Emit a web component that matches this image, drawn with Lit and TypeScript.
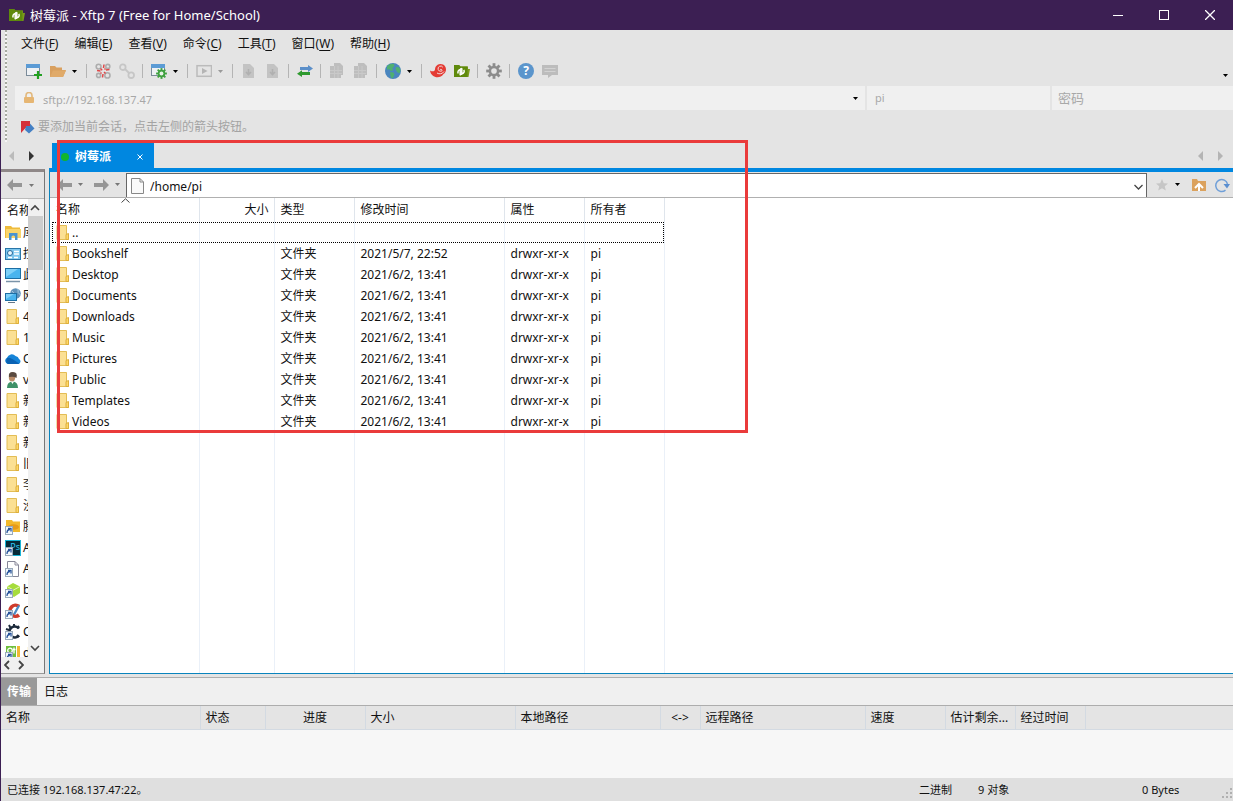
import { LitElement, html, css, svg, nothing } from "lit";
import { customElement } from "lit/decorators.js";

const icon = (body: unknown, w = 16, h = 16) =>
  html`<svg class="ico" width=${w} height=${h} viewBox="0 0 ${w} ${h}" aria-hidden="true">${body}</svg>`;

const caret = (color = "#000") => icon(svg`<path d="M0 0H5L2.5 3Z" fill=${color}/>`, 5, 3);

const folder = icon(svg`
  <path d="M1 .5H10.5V9L12.5 10V14.5H1Z" fill="#fbe093" stroke="#e3bd55"/>
  <path d="M10 9.5L12.5 8.5V14.5H10Z" fill="#ffd866" stroke="#dcae3c"/>`, 14, 15);

const xftp = svg`
  <path d="M0 2H5L6.500 3.500H14V6H16L14.500 14H0Z" fill="#7c9a1e"/>
  <path d="M0 2H5L6.500 3.500H13.500V14H0Z" fill="#5f8a0c"/>
  <path d="M6.200 12.200V6.500A2.800 2.800 0 0 0 4.200 10.500M7.800 5.200V11A2.800 2.800 0 0 0 9.800 6.800" fill="none" stroke="#fff" stroke-width="1.500"/>
  <path d="M6 6L8 5.200M6 12L8 11.200" stroke="#fff" stroke-width="1"/>`;

const gearPath = (cx: number, cy: number, r: number, color: string, hole: string) => svg`
  <g transform="translate(${cx} ${cy})">
    ${[0, 45, 90, 135].map(a => svg`<rect x=${-r * 0.18} y=${-r} width=${r * 0.36} height=${r * 2} fill=${color} transform="rotate(${a})"/>`)}
    <circle r=${r * 0.68} fill=${color}/><circle r=${r * 0.36} fill=${hole}/>
  </g>`;

const windowShape = svg`
  <rect x=".5" y="1.5" width="13" height="11" fill="#eef1f4" stroke="#7b8b99"/>
  <rect x="0" y="1" width="14" height="4" fill="#5b9bd5"/>`;

const greyPage = svg`<path d="M2 1H9L13 5V15H2Z" fill="#c3c3c3"/>`;
const greyStack = svg`<path d="M5 0H11L14 3V12H12V15H1V3H5Z" fill="#bebebe"/>
  <path d="M1 7.500H13M1 10.500H13M5.500 3V15M9 3V15" stroke="#c9c9c9"/>`;

const icons = {
  newSession: svg`${windowShape}<path d="M12 8V16M8 12H16" stroke="#22a022" stroke-width="2.200"/>`,
  open: svg`<path d="M0 3H5L6.500 4.500H12V7H16L13 14H0Z" fill="#d9a05f"/><path d="M3 7.500H16L13 14H0Z" fill="#e0aa69"/>`,
  disconnect: svg`<g fill="none" stroke="#adadad" stroke-width="1.600"><circle cx="3.600" cy="3.600" r="2.400"/><circle cx="12.800" cy="3.400" r="2"/><circle cx="3.600" cy="12.400" r="2"/><circle cx="12.400" cy="12.400" r="2.600"/></g>
    <path d="M9 1.500L8.500 5M2 7.500L5.500 8M11 7L14.500 6.500M8 11L7.500 14.500M5.500 5.500L7.200 7.200M9 9L10.500 10.500M10.500 5.500L9.500 6.500M6.500 9.500L5.500 10.500" stroke="#e04848" stroke-width="1.500"/>`,
  connect: svg`<g fill="none" stroke="#c6c6c6" stroke-width="1.800"><circle cx="3.800" cy="4.200" r="2.800"/><circle cx="12.200" cy="12.200" r="2.800"/><path d="M6 6L10 10"/></g>`,
  props: svg`${windowShape}${gearPath(10.5, 10.5, 5.4, "#3fa13f", "#e8f2e8")}`,
  run: svg`<rect x="1" y="2.700" width="14.500" height="10.600" fill="none" stroke="#bbb" stroke-width="1.500"/><path d="M6 5L11.500 8L6 11Z" fill="#b5b5b5"/>`,
  down: svg`${greyPage}<path d="M7.500 6V11M5 9L7.500 11.500L10 9" stroke="#b0b0b0" stroke-width="1.600" fill="none"/>`,
  transfer: svg`<path d="M3 4H11V2L16 5.500L11 9V7H3Z" fill="#5b8fc9"/><path d="M13 9H5V7.300L0 10.700L5 14V12H13Z" fill="#2f9a2f"/>`,
  stack: greyStack,
  globe: svg`<circle cx="8" cy="8" r="8" fill="#4a86bf"/><path d="M2 3.500C4 1 7 .5 9 1L9.500 3L7.500 5L8 7.500L5.500 8L4 6L2 7ZM5 9L8.500 9.500L9.500 11.500L7.500 15.500C5 14.500 5.500 11.500 5 9ZM11 4L14 4.200L15.600 7L14.500 10.500L12 9L10.500 6Z" fill="#4fb070"/>`,
  xshell: svg`<path d="M0 7.500C2.500 9 4.500 8.500 5 6.500A5.500 5.500 0 1 1 13.500 11C10 16.500 1 15 0 7.500Z" fill="#e43b34"/>
    <path d="M10.200 7A.9 .9 0 1 1 11.200 8.200A2.600 2.600 0 1 1 12.800 4.200M14 8.500A5 5 0 0 1 7 10" fill="none" stroke="#f3dcdb" stroke-width="1"/>`,
  xftp,
  gear: gearPath(8, 8, 7.8, "#8c8c8c", "#e4e4e4"),
  chat: svg`<path d="M0 2H16V12H10L6 15V12H0Z" fill="#bcbcbc"/><path d="M2.500 5.500H13.500M2.500 8.500H13.500" stroke="#d2d2d2"/>`,
};

const questionIcon = html`<span class="help">?</span>`;

type Tool = { t: unknown; name: string; drop?: string } | "sep";
const tools: Tool[] = [
  { t: icon(icons.newSession), name: "新建" },
  { t: icon(icons.open), name: "打开", drop: "#000" },
  "sep",
  { t: icon(icons.disconnect), name: "断开" },
  { t: icon(icons.connect), name: "重新连接" },
  "sep",
  { t: icon(icons.props), name: "属性", drop: "#000" },
  "sep",
  { t: icon(icons.run), name: "运行", drop: "#999" },
  "sep",
  { t: icon(icons.down), name: "下载" },
  { t: icon(icons.down), name: "上传" },
  "sep",
  { t: icon(icons.transfer), name: "同步" },
  "sep",
  { t: icon(icons.stack), name: "复制" },
  { t: icon(icons.stack), name: "粘贴" },
  "sep",
  { t: icon(icons.globe), name: "语言", drop: "#000" },
  "sep",
  { t: icon(icons.xshell), name: "Xshell" },
  { t: icon(icons.xftp), name: "Xftp" },
  "sep",
  { t: icon(icons.gear), name: "选项" },
  "sep",
  { t: questionIcon, name: "帮助" },
  { t: icon(icons.chat), name: "反馈" },
];

const menus = [["文件", "F"], ["编辑", "E"], ["查看", "V"], ["命令", "C"], ["工具", "T"], ["窗口", "W"], ["帮助", "H"]];

const files = [
  ["Bookshelf", "2021/5/7, 22:52"],
  ...["Desktop", "Documents", "Downloads", "Music", "Pictures", "Public", "Templates", "Videos"].map(n => [n, "2021/6/2, 13:41"]),
];

const shortcut = svg`<rect x=".5" y="7.500" width="7" height="8" fill="#f4f8fc" stroke="#9ab"/><path d="M2 14C2 11.500 3 10.500 5 10.500M3 9.500H6V12.500" fill="none" stroke="#27539b" stroke-width="1.300"/>`;
const monitor = (x: number, y: number, w: number, h: number) =>
  svg`<rect x=${x + 0.5} y=${y + 0.5} width=${w - 1} height=${h - 1} fill="#49b4ee" stroke="#1c6ea4"/><path d="M${x + 1} ${y + 1}H${x + w - 3}L${x + 1} ${y + h - 2}Z" fill="#7fd0f8"/>`;

const side: [unknown, string][] = [
  [icon(svg`<path d="M0 1H6L7.500 2.500H15V13H0Z" fill="#eebb3c"/><path d="M1 4H16V13H1Z" fill="#fad56c"/><path d="M4 15V8H12.500V15H10V11.500Q8.300 9.500 6.500 11.500V15Z" fill="#4a93cf"/>`), "库"],
  [icon(svg`<rect x=".5" y="2.500" width="15" height="11" fill="#7cc6ee" stroke="#2a76a8"/><circle cx="5" cy="7" r="2.500" fill="#e9f8ff" stroke="#26689c"/><path d="M9 5.500H14M9 8H14M3 11.500H7M9 11.500H13" stroke="#fff" stroke-width="1.300"/>`), "控制面板"],
  [icon(svg`${monitor(0, 1, 16, 11)}<path d="M1 14.500H15" stroke="#7a93a8" stroke-width="1.500"/>`), "此电脑"],
  [icon(svg`<circle cx="10.500" cy="5.500" r="5.300" fill="#5f92ba"/><path d="M7 3Q10 5 9 8M13 1Q12 5 15.500 7" stroke="#a9cbe2" fill="none"/>${monitor(0, 5, 12, 8)}<path d="M3 14.500H10" stroke="#667788"/>`), "网络"],
  [folder, "4"],
  [folder, "1"],
  [icon(svg`<path d="M3 13A3.300 3.300 0 0 1 2 6.800A5 5 0 0 1 10.500 5A4 4 0 0 1 14 8A2.700 2.700 0 0 1 13.500 13Z" fill="#1684d8"/><path d="M2 7Q5 5.500 14 12.500L13.500 13H3Q0 12 2 7Z" fill="#0a62b4"/>`), "OneDrive"],
  [icon(svg`<path d="M2 16Q2 9.500 7.500 9.500T13 16Z" fill="#3f9168"/><ellipse cx="7" cy="5" rx="3.200" ry="4.500" fill="#b98b68"/><path d="M4 5Q3 0 8 0T11.500 6Q9 4 4 5Z" fill="#5a4a40"/><path d="M6 9.500L7.500 12L9 9.500" fill="#fff"/>`), "vip"],
  [folder, "新建"],
  [folder, "新建"],
  [folder, "新建"],
  [folder, "旧"],
  [folder, "李"],
  [folder, "没"],
  [icon(svg`<path d="M1 1H7L8 2.500H15V13H1Z" fill="#f3b92d"/><ellipse cx="8.500" cy="8" rx="5.500" ry="2.800" fill="#e79b18"/>${shortcut}`), "腾讯"],
  [html`<span class="ps"><span>Ps</span>${icon(shortcut)}</span>`, "Adobe"],
  [icon(svg`<path d="M2.500 .5H10L13.500 4V15.500H2.500Z" fill="#fff" stroke="#889"/><path d="M10 .5V4H13.500" fill="none" stroke="#889"/>${shortcut}`), "Axure"],
  [icon(svg`<path d="M8 1L15 4.500V11L9 15L2 11V4.500Z" fill="#a6dc3c"/><path d="M2 4.500L8.500 8L15 4.500" stroke="#e4f6b8" fill="none"/>${shortcut}`), "blue"],
  [icon(svg`<path d="M14 3.500A5.500 5.500 0 1 0 14 12" fill="none" stroke="#cf3b2c" stroke-width="3.600"/><path d="M8 11L13 2L15 3L10 12Z" fill="#4a8ac4"/>${shortcut}`), "CCleaner"],
  [icon(svg`<path d="M14 4.500A5.500 5.500 0 1 0 14 11.500" fill="none" stroke="#1d2b3c" stroke-width="2.600"/><path d="M4 1L5.500 4M9 0V3M1 5L4 6M14 2L12 4M14 13L12 11" stroke="#1d2b3c" stroke-width="2"/>${shortcut}`), "Cheat"],
  [icon(svg`<path d="M1 1H11V14H1Z" fill="#6fbf3e"/><path d="M12 1H15V14H12Z" fill="#f0b833"/><circle cx="5" cy="5.500" r="2.300" fill="none" stroke="#fff" stroke-width="1.300"/><path d="M9 2.500V8.500M8 4.500H10.500" stroke="#fff" stroke-width="1.300"/>${shortcut}`), "designer"],
];

const transferCols: [string, string][] = [
  ["名称", "c199"], ["状态", "c65"], ["进度", "c100 mid"], ["大小", "c150"], ["本地路径", "c145"],
  ["<->", "c40 mid"], ["远程路径", "c165"], ["速度", "c80"], ["估计剩余...", "c70"], ["经过时间", "c70"], ["", ""],
];

const arrowBack = icon(svg`<path d="M0 7L6 1V5H15V9H6V13Z" fill="#969696"/>`, 15, 14);
const arrowFwd = icon(svg`<path d="M15 7L9 1V5H0V9H9V13Z" fill="#969696"/>`, 15, 14);
const tri = (left: boolean, color: string) =>
  icon(left ? svg`<path d="M5 0V10L0 5Z" fill=${color}/>` : svg`<path d="M0 0V10L5 5Z" fill=${color}/>`, 5, 10);
const chev = (d: string, w: number, h: number, sw = 1.6) =>
  icon(svg`<path d=${d} fill="none" stroke="#444" stroke-width=${sw}/>`, w, h);

@customElement("app-root")
export class AppRoot extends LitElement {
  static styles = css`
    :host {
      display: flex;
      flex-direction: column;
      position: relative;
      height: 100vh;
      box-sizing: border-box;
      overflow: hidden;
      background: #e4e4e4;
      color: #111;
      font: 12px/20px "Noto Sans", "Noto Sans CJK SC", sans-serif;
    }
    *, *::before { box-sizing: border-box; }
    button, input { font: inherit; color: inherit; border: 0; padding: 0; margin: 0; background: none; border-radius: 0; }
    input { min-width: 0; outline: none; }
    button { display: flex; align-items: center; justify-content: center; white-space: nowrap; }
    .ico { display: block; flex: none; }
    .grow { flex: 1; min-width: 0; }

    .title { flex: none; display: flex; align-items: center; height: 30px; padding-left: 9px; background: #3c1f53; color: #fff; }
    .title h1 { margin: 0; padding-left: 5px; font: inherit; font-size: 13px; flex: 1; }
    .title button { width: 46px; height: 29px; }
    .body { flex: 1; min-height: 0; display: flex; flex-direction: column; border-left: 1px solid #3c1f53; }

    .chrome { flex: none; display: flex; height: 112px; }
    .grip { flex: none; width: 2px; margin: 0 8px 0 4px; background: repeating-linear-gradient(#a6aaa0 0 2px, #f6f6f6 2px 4px); }
    .rows { flex: 1; min-width: 0; display: flex; flex-direction: column; }
    .menu { display: flex; height: 27px; align-items: center; gap: 16px; padding-left: 6px; }
    .menu u { text-underline-offset: 2px; }
    .tools { display: flex; height: 28px; align-items: center; padding-left: 7px; }
    .tools button { width: 24px; height: 24px; }
    .tools .drop { width: 13px; justify-content: flex-start; padding-left: 2px; }
    .sep { width: 1px; height: 14px; margin: 0 4px 0 3px; background: #b4b4b4; }
    .tools .more { width: 12px; margin-left: auto; align-items: flex-end; padding-bottom: 6px; margin-right: 2px; }
    .help { width: 16px; height: 16px; border-radius: 8px; background: #5b95cc; color: #fff; font-weight: 700; line-height: 16px; text-align: center; }
    .address { display: flex; height: 25px; padding-top: 1px; gap: 2px; color: #a8a8a8; }
    .address label { display: flex; align-items: center; background: #f0f0f0; padding: 2px 0 0 8px; min-width: 0; }
    .address input::placeholder { color: #a8a8a8; opacity: 1; }
    .address .host { flex: 1; gap: 8px; font-size: 11px; }
    .address .host input { flex: 1; padding-top: 2px; }
    .address .host .ico { margin-top: -2px; }
    .address .host button { width: 20px; height: 20px; color: #000; }
    .address .user { width: 183px; padding: 0 0 0 8px; font-size: 11px; }
    .address .pass { width: 181px; padding: 0 0 0 6px; font-size: 13px; }
    .address .user input, .address .pass input { width: 100%; }
    .hint { display: flex; align-items: center; gap: 3px; height: 32px; padding: 2px 0 0 5px; color: #a3a3a3; }

    .main { position: relative; flex: 1; min-height: 0; display: flex; }
    .left { width: 44px; flex: none; display: flex; flex-direction: column; }
    .steps { display: flex; height: 27px; align-items: center; gap: 15px; padding: 0 8px; }
    .leftpane { flex: 1; min-height: 0; display: flex; flex-direction: column; border-top: 3px solid #8f8888; border-right: 1px solid #777; border-bottom: 1px solid #999; background: #f0f0f0; }
    .leftbar { height: 27px; display: flex; align-items: center; gap: 7px; padding-left: 6px; background: #e4e4e4; border-bottom: 1px solid #bbb; }
    .split { flex: 1; min-height: 0; display: flex; }
    .sidelist { flex: 1; min-width: 0; overflow: hidden; background: #fff; }
    .sidehead { height: 23px; padding: 2px 0 1px 6px; white-space: nowrap; overflow: hidden; }
    .sidelist ul { list-style: none; margin: 0; padding: 0; }
    .sidelist li { display: flex; align-items: center; height: 21px; padding-left: 4px; gap: 2px; white-space: nowrap; overflow: hidden; }
    .slot { width: 16px; flex: none; display: flex; justify-content: center; }
    .ps { display: block; position: relative; width: 16px; height: 16px; background: #062a38; border: 1px solid #17b3d6; color: #31c5f0; font-size: 9px; line-height: 12px; text-align: right; }
    .ps .ico { position: absolute; left: -1px; top: -1px; }
    .vbar { width: 16px; flex: none; display: flex; flex-direction: column; }
    .vbar button { height: 17px; width: 14px; }
    .thumb { height: 54px; width: 15px; background: #cdcdcd; }
    .hbar { display: flex; gap: 8px; height: 16px; align-items: center; padding-left: 3px; }

    .right { flex: 1; min-width: 0; margin-left: 4px; display: flex; flex-direction: column; }
    .tabs { display: flex; height: 26px; padding-left: 3px; align-items: stretch; }
    .tab { width: 102px; margin-top: 1px; padding: 2px 11px 0 9px; background: #0087e0; color: #fff; font-weight: 700; justify-content: flex-start; gap: 6px; }
    .tab .x { margin-left: auto; }
    .tabs .steps { margin-left: auto; padding: 0 10px; }
    .pane { flex: 1; min-height: 0; display: flex; flex-direction: column; border-top: 4px solid #0087e0; border-left: 1px solid #0a84bd; border-bottom: 1px solid #0a84bd; background: #fff; }
    .pathbar { flex: none; display: flex; height: 26px; align-items: center; background: #e4e4e4; border-bottom: 1px solid #b0b0b0; padding: 0 4px 0 7px; }
    .pathbar button { height: 24px; }
    .pathbar .c { width: 14px; }
    .pathbar .c .ico { margin-left: 2px; }
    .pathbar .nav { width: 15px; }
    .pathbar .fwd { margin-left: 8px; }
    .path { flex: 1; min-width: 0; display: flex; align-items: center; align-self: stretch; margin: 1px 7px 0 3px; background: #fff; border: 1px solid #666; border-bottom: 0; padding-left: 4px; gap: 6px; }
    .path input { flex: 1; padding-top: 2px; }
    .path button { width: 16px; padding-top: 3px; }

    table { border-collapse: collapse; table-layout: fixed; }
    th { font-weight: 400; text-align: left; }
    th, td { padding: 0 0 0 6px; white-space: nowrap; overflow: hidden; }
    .files { flex: 1; width: 612px; margin-left: 2px; }
    .files th, .files td { border-right: 1px solid #eaf0f8; height: 21px; }
    .files th:first-child, .files td:first-child { padding-left: 4px; }
    .files th { height: 24px; border-right-color: #dfe5ec; position: relative; }
    .files .rest td { height: auto; }
    .files .size { text-align: right; padding: 0 5px 0 0; }
    .files .focus { outline: 1px dotted #000; outline-offset: -1px; }
    .name { display: flex; align-items: center; gap: 2px; }
    .sort { position: absolute; left: 69px; top: 0; }
    .c147 { width: 147px; } .c150 { width: 150px; } .c75 { width: 75px; } .c80 { width: 80px; } .c199 { width: 199px; } .c65 { width: 65px; }
    .c100 { width: 100px; } .c145 { width: 145px; } .c40 { width: 40px; } .c165 { width: 165px; } .c70 { width: 70px; }
    .mark { position: absolute; left: 56px; top: -2px; width: 691px; height: 293px; border: 3px solid #ea3b3b; pointer-events: none; }

    .bottom { flex: none; display: flex; flex-direction: column; margin-top: 3px; border-top: 1px solid #adadad; background: #f0f0f0; }
    .btabs { display: flex; height: 28px; border-bottom: 1px solid #adadad; }
    .btabs button { padding: 2px 7px 0; }
    .btabs .on { padding: 2px 6px 0; background: #999; color: #fff; font-weight: 700; }
    .queue { width: 100%; background: #e4e4e4; }
    .queue th { height: 24px; padding: 2px 0 0 5px; border-right: 1px solid #d3dae2; border-bottom: 1px solid #d3dae2; }
    .queue th:last-child { border-right: 0; }
    .queue .mid { text-align: center; padding: 2px 0 0; }
    .empty { height: 48px; background: #f7f7f7; }
    .status { display: flex; align-items: center; height: 23px; background: #dfdfdf; padding-left: 6px; font-size: 11px; }
    .status .mode { width: 59px; } .status .count { width: 164px; } .status .bytes { width: 80px; }
    .status .ico { align-self: flex-end; margin-right: 1px; }
  `;

  render() {
    return html`
      <header class="title">
        ${icon(xftp)}
        <h1>树莓派 - Xftp 7 (Free for Home/School)</h1>
        <button aria-label="最小化">${icon(svg`<path d="M0 5.500H10" stroke="#fff"/>`, 10, 11)}</button>
        <button aria-label="最大化">${icon(svg`<rect x=".5" y=".5" width="9" height="9" fill="none" stroke="#fff"/>`, 10, 10)}</button>
        <button aria-label="关闭">${icon(svg`<path d="M0 0L10 10M10 0L0 10" stroke="#fff" stroke-width="1.300"/>`, 10, 10)}</button>
      </header>
      <div class="body">
        <div class="chrome">
          <div class="grip"></div>
          <div class="rows">
            <nav class="menu">${menus.map(([t, k]) => html`<button>${t}(<u>${k}</u>)</button>`)}</nav>
            <div class="tools">
              ${tools.map(t => t === "sep"
                ? html`<span class="sep"></span>`
                : html`<button aria-label=${t.name}>${t.t}</button>${t.drop ? html`<button class="drop" aria-label="${t.name}选项">${caret(t.drop)}</button>` : nothing}`)}
              <button class="more" aria-label="更多">${caret()}</button>
            </div>
            <div class="address">
              <label class="host">
                ${icon(svg`<path d="M3 5V3.500A3 3 0 0 1 9 3.500V5" fill="none" stroke="#e2b87c" stroke-width="1.600"/><rect x="1" y="5" width="10" height="6" rx="1" fill="#e6b673"/>`, 12, 12)}
                <input aria-label="主机地址" value="sftp://192.168.137.47" />
                <button aria-label="主机列表">${caret()}</button>
              </label>
              <label class="user"><input aria-label="用户名" placeholder="pi" /></label>
              <label class="pass"><input aria-label="密码" placeholder="密码" /></label>
            </div>
            <div class="hint">
              ${icon(svg`<path d="M1 1H10V9L5.500 8L1 13Z" fill="#d5303a"/><path d="M6 6H10V3.500L14.500 8.500L9 13.500L5 10Z" fill="#4480c4"/>`, 15, 14)}
              <span>要添加当前会话，点击左侧的箭头按钮。</span>
            </div>
          </div>
        </div>

        <main class="main">
          <section class="left">
            <div class="steps">
              <button aria-label="上一个">${tri(true, "#bbb")}</button>
              <button aria-label="下一个">${tri(false, "#333")}</button>
            </div>
            <div class="leftpane">
              <div class="leftbar"><button aria-label="后退">${arrowBack}</button><button aria-label="历史">${caret("#777")}</button></div>
              <div class="split">
                <div class="sidelist">
                  <div class="sidehead">名称</div>
                  <ul>${side.map(([i, n]) => html`<li><span class="slot">${i}</span><span>${n}</span></li>`)}</ul>
                </div>
                <div class="vbar">
                  <button aria-label="向上滚动">${chev("M1 6L5 2L9 6", 10, 8)}</button>
                  <div class="thumb"></div>
                  <div class="grow"></div>
                  <button aria-label="向下滚动">${chev("M1 2L5 6L9 2", 10, 8)}</button>
                </div>
              </div>
              <div class="hbar">
                <button aria-label="向左滚动">${chev("M5 1L1 5L5 9", 6, 10, 1.8)}</button>
                <button aria-label="向右滚动">${chev("M1 1L5 5L1 9", 6, 10, 1.8)}</button>
              </div>
            </div>
          </section>

          <section class="right">
            <div class="tabs">
              <button class="tab">
                ${icon(svg`<circle cx="4" cy="4" r="4" fill="#12b52c"/>`, 8, 8)}
                <span>树莓派</span>
                <span class="x">${icon(svg`<path d="M.5 .5L5.500 5.500M5.500 .5L.5 5.500" stroke="#fff"/>`, 6, 6)}</span>
              </button>
              <div class="steps">
                <button aria-label="左移标签">${tri(true, "#b4b4b4")}</button>
                <button aria-label="右移标签">${tri(false, "#b4b4b4")}</button>
              </div>
            </div>
            <div class="pane">
              <div class="pathbar">
                <button class="nav" aria-label="后退">${arrowBack}</button><button class="c" aria-label="后退历史">${caret("#777")}</button>
                <button class="nav fwd" aria-label="前进">${arrowFwd}</button><button class="c" aria-label="前进历史">${caret("#777")}</button>
                <div class="path">
                  ${icon(svg`<path d="M.5 .5H9L12.500 4V15.500H.5Z" fill="#fafafa" stroke="#888"/><path d="M9 .5V4H12.500" fill="none" stroke="#888"/>`, 13, 16)}
                  <input aria-label="路径" value="/home/pi" />
                  <button aria-label="路径列表">${chev("M.5 1L4.500 5L8.500 1", 9, 7, 1.3)}</button>
                </div>
                <button class="nav" aria-label="收藏">${icon(svg`<path d="M8 2L9.800 6.200L14 6.500L10.800 9.300L11.800 13.500L8 11.200L4.200 13.500L5.200 9.300L2 6.500L6.200 6.200Z" fill="#c6c6c6"/>`)}</button>
                <button class="c" aria-label="收藏列表">${caret()}</button>
                <button class="nav fwd" aria-label="上级目录">${icon(svg`<path d="M1 2H6L7 4H15V14H1Z" fill="#dba25e"/><path d="M4 11L8 7L12 11M8 8V14" stroke="#fff" stroke-width="2" fill="none"/>`)}</button>
                <button class="nav fwd" aria-label="刷新">${icon(svg`<path d="M11.500 13.200A6 6 0 1 1 13.500 7" fill="none" stroke="#6f9fd8" stroke-width="1.500"/><path d="M9.500 7H16L13 11.500Z" fill="#5b8fd0"/>`)}</button>
              </div>
              <table class="files">
                <thead><tr>
                  <th class="c147">名称<span class="sort">${chev("M.5 4.500L4.500 .8L8.500 4.500", 9, 5, 1)}</span></th>
                  <th class="c75 size">大小</th><th class="c80">类型</th><th class="c150">修改时间</th><th class="c80">属性</th><th class="c80">所有者</th>
                </tr></thead>
                <tbody>
                  <tr class="focus"><td><span class="name">${folder}<span>..</span></span></td><td></td><td></td><td></td><td></td><td></td></tr>
                  ${files.map(([n, d]) => html`<tr>
                    <td><span class="name">${folder}<span>${n}</span></span></td><td></td>
                    <td>文件夹</td><td>${d}</td><td>drwxr-xr-x</td><td>pi</td></tr>`)}
                  <tr class="rest"><td></td><td></td><td></td><td></td><td></td><td></td></tr>
                </tbody>
              </table>
            </div>
          </section>
          <div class="mark"></div>
        </main>

        <section class="bottom">
          <div class="btabs"><button class="on">传输</button><button>日志</button></div>
          <table class="queue"><thead><tr>${transferCols.map(([t, c]) => html`<th class=${c}>${t}</th>`)}</tr></thead></table>
          <div class="empty"></div>
          <footer class="status">
            <span class="grow">已连接 192.168.137.47:22。</span>
            <span class="mode">二进制</span><span class="count">9 对象</span><span class="bytes">0 Bytes</span>
            ${icon(svg`<path d="M8 1H10V3H8ZM8 5H10V7H8ZM4 5H6V7H4ZM8 9H10V11H8ZM4 9H6V11H4ZM0 9H2V11H0Z" fill="#b0b0b0"/>`, 10, 14)}
          </footer>
        </section>
      </div>
    `;
  }
}
